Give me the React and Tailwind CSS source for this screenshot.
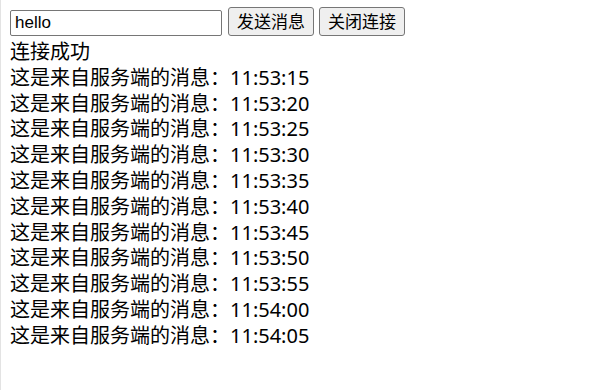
const TIMES = [
  "11:53:15", "11:53:20", "11:53:25", "11:53:30", "11:53:35", "11:53:40",
  "11:53:45", "11:53:50", "11:53:55", "11:54:00", "11:54:05",
];

export default function App() {
  return (
    <div className="min-h-[390px] bg-white border-l border-[#e3e3e3] text-black font-['Noto_Sans','Noto_Sans_CJK_SC',sans-serif]">
      {/* toolbar */}
      <div className="flex items-end pt-[7px] pl-[9px]">
        <input
          defaultValue="hello"
          className="w-[212px] h-[26px] border border-[#767676] rounded-[2px] px-[4px] text-[17px] font-['Liberation_Sans',sans-serif] text-black outline-none"
        />
        <button className="ml-[6px] h-[29px] w-[86px] bg-[#efefef] border border-[#767676] rounded-[3px] text-[17px] leading-none text-black">
          发送消息
        </button>
        <button className="ml-[5px] h-[29px] w-[86px] bg-[#efefef] border border-[#767676] rounded-[3px] text-[17px] leading-none text-black">
          关闭连接
        </button>
      </div>

      {/* messages */}
      <div className="pl-[9px] pt-[3px] text-[20px] leading-[25.8px]">
        <div>连接成功</div>
        {TIMES.map((t) => (
          <div key={t}>这是来自服务端的消息：{t}</div>
        ))}
      </div>
    </div>
  );
}
